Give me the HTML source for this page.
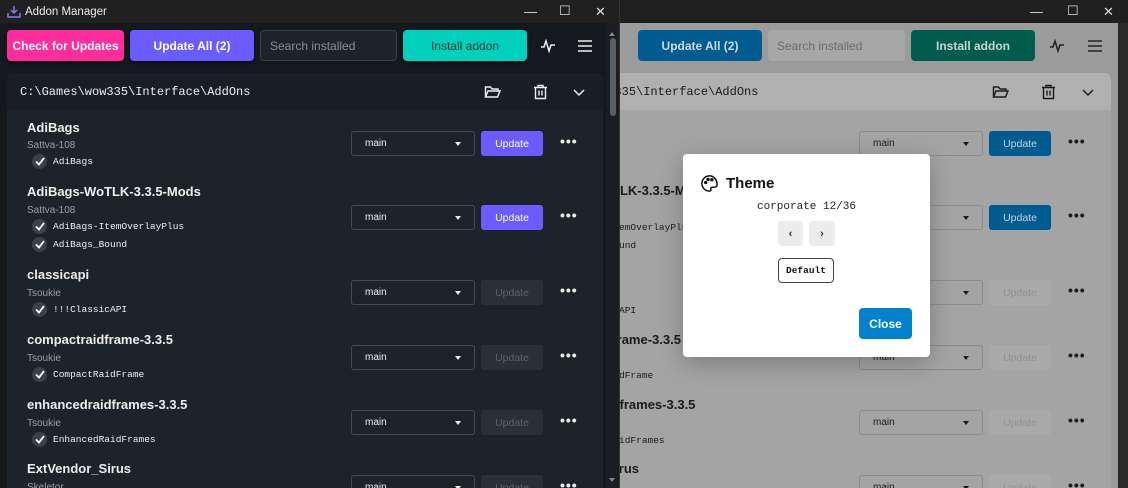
<!DOCTYPE html>
<html><head><meta charset="utf-8"><style>
*{box-sizing:border-box;margin:0;padding:0}
body{width:1128px;height:488px;overflow:hidden;font-family:"Liberation Sans",sans-serif;background:#202020;position:relative}
.win{position:absolute;top:0;width:620px;height:488px;overflow:hidden}
.title{position:absolute;left:0;top:0;width:620px;height:23px;background:#202020;color:#fff;font-size:12px}
.ctl{position:absolute;top:4px;font-size:13px;color:#ddd}
.abs{position:absolute}
.btn{position:absolute;border-radius:4px;display:flex;align-items:center;justify-content:center;font-size:12px;font-weight:bold}
.mono{font-family:"Liberation Mono",monospace}
.row .name{position:absolute;left:27px;font-size:13px;font-weight:bold}
.row .auth{position:absolute;left:27px;font-size:10px}
.row .it{position:absolute;left:32px;font-size:9.5px;font-family:"Liberation Mono",monospace;display:flex;align-items:center;gap:6px}
.cb{width:15px;height:15px;border-radius:50%;display:inline-flex;align-items:center;justify-content:center}
.sel{position:absolute;left:351px;width:124px;height:25px;border-radius:3px;font-size:10px;padding:0 0 0 13px;display:flex;align-items:center}
.sel:after{content:"";position:absolute;right:13px;top:10px;border:3.5px solid transparent;border-top:4px solid currentColor}
.upd{position:absolute;left:481px;width:62px;height:25px;border-radius:3px;font-size:10.5px;display:flex;align-items:center;justify-content:center}
.dots{position:absolute;left:560px;font-size:14px;font-weight:bold;letter-spacing:1px}
</style></head><body>

<!-- RIGHT (dimmed light) window -->
<div class="win" style="left:508px;background:#9b9b9b">
  <div class="btn" style="left:130px;top:30px;width:124px;height:31px;background:#005b90;color:#cfd9e2">Update All (2)</div>
  <div class="btn" style="left:260px;top:30px;width:137px;height:31px;background:#a7a7a7;color:#6b6b6b;font-weight:normal;justify-content:flex-start;padding-left:9px">Search installed</div>
  <div class="btn" style="left:403px;top:30px;width:124px;height:31px;background:#005d4e;color:#c8d6d2">Install addon</div>
  <svg class="abs" style="left:541px;top:38px" width="16" height="16" viewBox="0 0 16 16" fill="none" stroke="#222" stroke-width="1.5"><path d="M1 9h3l2-6 3 10 2-6h4"/></svg>
  <svg class="abs" style="left:579px;top:38px" width="16" height="16" viewBox="0 0 16 16" stroke="#222" stroke-width="1.6"><path d="M1 3h14M1 8h14M1 13h14"/></svg>
  <div class="abs" style="left:7px;top:73px;width:596px;height:420px;background:#a4a4a4;border-radius:6px;overflow:hidden">
    <div class="abs" style="left:0;top:0;width:596px;height:37px;background:#b0b0b0"></div>
    <div class="abs mono" style="left:13px;top:12px;font-size:12px;color:#1a1a1a">C:\Games\wow335\Interface\AddOns</div>
  </div>
  <svg class="abs" style="left:484px;top:84px" width="17" height="16" viewBox="0 0 17 16" fill="none" stroke="#1a1a1a" stroke-width="1.4"><path d="M1.5 13V3h5l1.5 2h6v2M1.5 13l2.5-6h12l-2.5 6z"/></svg>
  <svg class="abs" style="left:533px;top:84px" width="15" height="16" viewBox="0 0 15 16" fill="none" stroke="#1a1a1a" stroke-width="1.4"><path d="M1 3.5h13M5 3.5V1.5h5v2M2.5 3.5v11h10v-11M6 6.5v5M9 6.5v5"/></svg>
  <svg class="abs" style="left:574px;top:87px" width="12" height="10" viewBox="0 0 12 10" fill="none" stroke="#1a1a1a" stroke-width="1.5"><path d="M1 3l5 5 5-5"/></svg>
  <div class="abs" style="left:27px;top:183px;font-size:13px;font-weight:bold;color:#1a1a1a">AdiBags-WoTLK-3.3.5-Mods</div>
  <div class="abs mono" style="left:54px;top:222px;font-size:9.5px;color:#1a1a1a">AdiBags-ItemOverlayPlus</div>
  <div class="abs mono" style="left:54px;top:240px;font-size:9.5px;color:#1a1a1a">AdiBags_Bound</div>
  <div class="abs mono" style="left:54px;top:305px;font-size:9.5px;color:#1a1a1a">!!!ClassicAPI</div>
  <div class="abs" style="left:27px;top:332px;font-size:13px;font-weight:bold;color:#1a1a1a">compactraidframe-3.3.5</div>
  <div class="abs mono" style="left:54px;top:370px;font-size:9.5px;color:#1a1a1a">CompactRaidFrame</div>
  <div class="abs" style="left:27px;top:397px;font-size:13px;font-weight:bold;color:#1a1a1a">enhancedraidframes-3.3.5</div>
  <div class="abs mono" style="left:54px;top:435px;font-size:9.5px;color:#1a1a1a">EnhancedRaidFrames</div>
  <div class="abs" style="left:27px;top:461px;font-size:13px;font-weight:bold;color:#1a1a1a">ExtVendor_Sirus</div>
  <div class="sel" style="top:131px;border:1px solid #8c8c8c;color:#1a1a1a">main</div>
  <div class="upd" style="top:131px;background:#005b90;color:#c8d3dd">Update</div><div class="dots" style="top:133px;color:#1a1a1a">•••</div>
  <div class="sel" style="top:205px;border:1px solid #8c8c8c;color:#1a1a1a">main</div>
  <div class="upd" style="top:205px;background:#005b90;color:#c8d3dd">Update</div><div class="dots" style="top:207px;color:#1a1a1a">•••</div>
  <div class="sel" style="top:280px;border:1px solid #8c8c8c;color:#1a1a1a">main</div>
  <div class="upd" style="top:280px;background:#a9a9a9;color:#919191">Update</div><div class="dots" style="top:282px;color:#1a1a1a">•••</div>
  <div class="sel" style="top:345px;border:1px solid #8c8c8c;color:#1a1a1a">main</div>
  <div class="upd" style="top:345px;background:#a9a9a9;color:#919191">Update</div><div class="dots" style="top:347px;color:#1a1a1a">•••</div>
  <div class="sel" style="top:410px;border:1px solid #8c8c8c;color:#1a1a1a">main</div>
  <div class="upd" style="top:410px;background:#a9a9a9;color:#919191">Update</div><div class="dots" style="top:412px;color:#1a1a1a">•••</div>
  <div class="sel" style="top:475px;border:1px solid #8c8c8c;color:#1a1a1a">main</div>
  <div class="upd" style="top:475px;background:#a9a9a9;color:#919191">Update</div><div class="dots" style="top:477px;color:#1a1a1a">•••</div>
  <div class="abs" style="left:610px;top:23px;width:10px;height:465px;background:#2a2a2a"></div>
  <div class="title"></div>
  <div class="ctl" style="left:522px">—</div><div class="ctl" style="left:559px;top:3px">☐</div><div class="ctl" style="left:595px">✕</div>
</div>

<!-- Modal -->
<div class="abs" style="left:683px;top:154px;width:247px;height:203px;background:#fff;border-radius:4px;box-shadow:0 6px 24px rgba(0,0,0,.25)">
  <svg class="abs" style="left:17px;top:20px" width="19" height="19" viewBox="0 0 20 20" fill="none" stroke="#111" stroke-width="1.6"><path d="M10 2a8 8 0 0 0 0 16c1.3 0 1.8-.9 1.4-1.9-.5-1.1.2-2.1 1.4-2.1H15a3 3 0 0 0 3-3c0-5-3.6-9-8-9z"/><circle cx="6" cy="9" r="1" fill="#111"/><circle cx="8.5" cy="5.8" r="1" fill="#111"/><circle cx="12.5" cy="6" r="1" fill="#111"/></svg>
  <div class="abs" style="left:43px;top:21px;font-size:15px;font-weight:bold;color:#111">Theme</div>
  <div class="abs mono" style="left:0;width:247px;text-align:center;top:47px;font-size:11px;color:#222">corporate 12/36</div>
  <div class="btn" style="left:95px;top:67px;width:25px;height:25px;background:#ececec;color:#333;font-size:11px">‹</div>
  <div class="btn" style="left:126px;top:67px;width:26px;height:25px;background:#ececec;color:#333;font-size:11px">›</div>
  <div class="btn mono" style="left:95px;top:104px;width:56px;height:25px;border:1px solid #444;color:#111;font-size:9.5px">Default</div>
  <div class="btn" style="left:176px;top:154px;width:53px;height:31px;background:#0082ce;color:#fff;font-size:12px">Close</div>
</div>

<!-- LEFT (dark) window -->
<div class="win" style="left:0;background:#15191e;border-right:1px solid #333">
  <div class="title"></div>
  <svg class="abs" style="left:7px;top:5px" width="14" height="13" viewBox="0 0 14 13" fill="none" stroke="#8a7cf0" stroke-width="1.5"><path d="M7 1v7M4 5l3 3 3-3M1 8v4h12V8"/></svg>
  <div class="abs" style="left:25px;top:6px;font-size:11.5px;color:#eee">Addon Manager</div>
  <div class="ctl" style="left:524px">—</div><div class="ctl" style="left:559px;top:3px">☐</div><div class="ctl" style="left:595px">✕</div>
  <div class="btn" style="left:7px;top:30px;width:117px;height:31px;background:#ff2d9b;color:#fff;box-shadow:0 2px 3px rgba(0,0,0,.5)">Check for Updates</div>
  <div class="btn" style="left:130px;top:30px;width:124px;height:31px;background:#6a5cff;color:#fff;box-shadow:0 2px 3px rgba(0,0,0,.5)">Update All (2)</div>
  <div class="btn" style="left:260px;top:30px;width:137px;height:31px;background:#1d232a;border:1px solid #3a4048;color:#8a9098;font-weight:normal;justify-content:flex-start;padding-left:9px">Search installed</div>
  <div class="btn" style="left:403px;top:30px;width:124px;height:31px;background:#00d0bc;color:#0b3a35;font-weight:normal;box-shadow:0 2px 3px rgba(0,0,0,.5)">Install addon</div>
  <svg class="abs" style="left:540px;top:38px" width="16" height="16" viewBox="0 0 16 16" fill="none" stroke="#eee" stroke-width="1.5"><path d="M1 9h3l2-6 3 10 2-6h4"/></svg>
  <svg class="abs" style="left:577px;top:38px" width="16" height="16" viewBox="0 0 16 16" stroke="#eee" stroke-width="1.6"><path d="M1 3h14M1 8h14M1 13h14"/></svg>
  <div class="abs" style="left:7px;top:73px;width:596px;height:420px;background:#1d232a;border-radius:6px;overflow:hidden">
    <div class="abs" style="left:0;top:0;width:596px;height:37px;background:#191e24"></div>
    <div class="abs mono" style="left:13px;top:12px;font-size:12px;color:#eee">C:\Games\wow335\Interface\AddOns</div>
  </div>
  <svg class="abs" style="left:484px;top:84px" width="17" height="16" viewBox="0 0 17 16" fill="none" stroke="#eee" stroke-width="1.4"><path d="M1.5 13V3h5l1.5 2h6v2M1.5 13l2.5-6h12l-2.5 6z"/></svg>
  <svg class="abs" style="left:533px;top:84px" width="15" height="16" viewBox="0 0 15 16" fill="none" stroke="#eee" stroke-width="1.4"><path d="M1 3.5h13M5 3.5V1.5h5v2M2.5 3.5v11h10v-11M6 6.5v5M9 6.5v5"/></svg>
  <svg class="abs" style="left:573px;top:87px" width="12" height="10" viewBox="0 0 12 10" fill="none" stroke="#eee" stroke-width="1.5"><path d="M1 3l5 5 5-5"/></svg>

  <div class="row" style="color:#eee">
    <div class="name" style="top:120px">AdiBags</div>
    <div class="auth" style="top:140px;color:#9aa0a8">Sattva-108</div>
    <div class="it" style="top:154px"><span class="cb" style="background:#3b414a"><svg width="10" height="9" viewBox="0 0 10 9" fill="none" stroke="#fff" stroke-width="1.8"><path d="M1 4.5l3 3L9 1"/></svg></span>AdiBags</div>

    <div class="name" style="top:184px">AdiBags-WoTLK-3.3.5-Mods</div>
    <div class="auth" style="top:205px;color:#9aa0a8">Sattva-108</div>
    <div class="it" style="top:219px"><span class="cb" style="background:#3b414a"><svg width="10" height="9" viewBox="0 0 10 9" fill="none" stroke="#fff" stroke-width="1.8"><path d="M1 4.5l3 3L9 1"/></svg></span>AdiBags-ItemOverlayPlus</div>
    <div class="it" style="top:237px"><span class="cb" style="background:#3b414a"><svg width="10" height="9" viewBox="0 0 10 9" fill="none" stroke="#fff" stroke-width="1.8"><path d="M1 4.5l3 3L9 1"/></svg></span>AdiBags_Bound</div>

    <div class="name" style="top:267px">classicapi</div>
    <div class="auth" style="top:288px;color:#9aa0a8">Tsoukie</div>
    <div class="it" style="top:302px"><span class="cb" style="background:#3b414a"><svg width="10" height="9" viewBox="0 0 10 9" fill="none" stroke="#fff" stroke-width="1.8"><path d="M1 4.5l3 3L9 1"/></svg></span>!!!ClassicAPI</div>

    <div class="name" style="top:332px">compactraidframe-3.3.5</div>
    <div class="auth" style="top:353px;color:#9aa0a8">Tsoukie</div>
    <div class="it" style="top:367px"><span class="cb" style="background:#3b414a"><svg width="10" height="9" viewBox="0 0 10 9" fill="none" stroke="#fff" stroke-width="1.8"><path d="M1 4.5l3 3L9 1"/></svg></span>CompactRaidFrame</div>

    <div class="name" style="top:397px">enhancedraidframes-3.3.5</div>
    <div class="auth" style="top:418px;color:#9aa0a8">Tsoukie</div>
    <div class="it" style="top:432px"><span class="cb" style="background:#3b414a"><svg width="10" height="9" viewBox="0 0 10 9" fill="none" stroke="#fff" stroke-width="1.8"><path d="M1 4.5l3 3L9 1"/></svg></span>EnhancedRaidFrames</div>

    <div class="name" style="top:461px">ExtVendor_Sirus</div>
    <div class="auth" style="top:482px;color:#9aa0a8">Skeletor</div>

    <div class="sel" style="top:131px;border:1px solid #444b55">main</div>
    <div class="upd" style="top:131px;background:#6a5cff;color:#fff">Update</div><div class="dots" style="top:133px">•••</div>
    <div class="sel" style="top:205px;border:1px solid #444b55">main</div>
    <div class="upd" style="top:205px;background:#6a5cff;color:#fff">Update</div><div class="dots" style="top:207px">•••</div>
    <div class="sel" style="top:280px;border:1px solid #444b55">main</div>
    <div class="upd" style="top:280px;background:#2a3038;color:#5c636c">Update</div><div class="dots" style="top:282px">•••</div>
    <div class="sel" style="top:345px;border:1px solid #444b55">main</div>
    <div class="upd" style="top:345px;background:#2a3038;color:#5c636c">Update</div><div class="dots" style="top:347px">•••</div>
    <div class="sel" style="top:410px;border:1px solid #444b55">main</div>
    <div class="upd" style="top:410px;background:#2a3038;color:#5c636c">Update</div><div class="dots" style="top:412px">•••</div>
    <div class="sel" style="top:475px;border:1px solid #444b55">main</div>
    <div class="upd" style="top:475px;background:#2a3038;color:#5c636c">Update</div><div class="dots" style="top:477px">•••</div>
  </div>
  <div class="abs" style="left:606px;top:23px;width:13px;height:465px;background:#1a1e23"></div>
  <div class="abs" style="left:609px;top:29px;border:3.5px solid transparent;border-bottom:4px solid #888"></div>
  <div class="abs" style="left:610px;top:38px;width:6px;height:78px;border-radius:3px;background:#5a5f66"></div>
  <div class="abs" style="left:609px;top:478px;border:3.5px solid transparent;border-top:4px solid #888"></div>
</div>
</body></html>
